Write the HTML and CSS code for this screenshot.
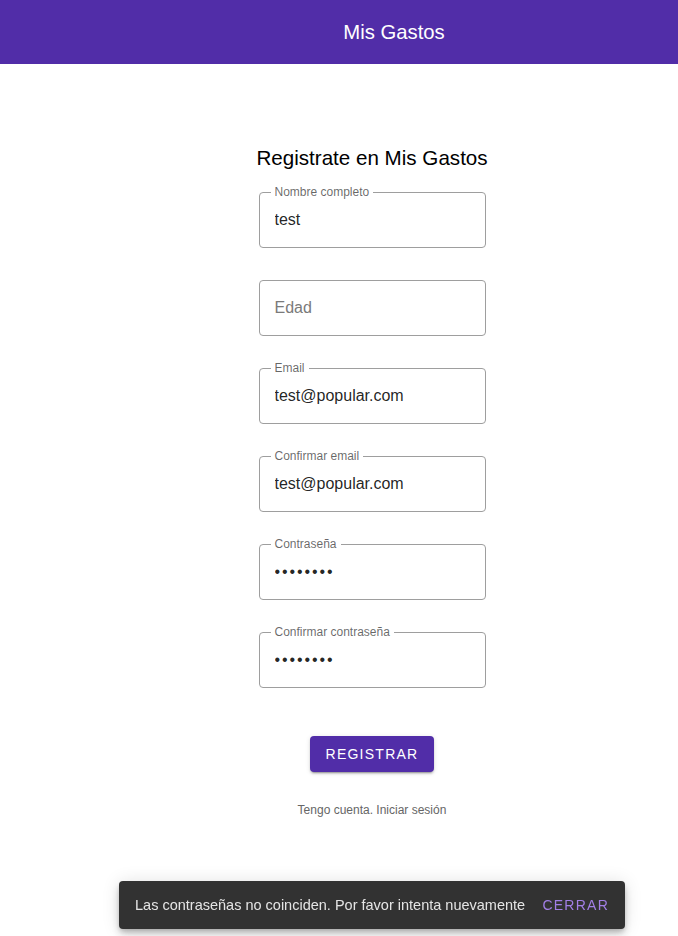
FILE: index.html
```html
<!DOCTYPE html>
<html lang="es">
<head>
<meta charset="utf-8">
<title>Mis Gastos</title>
<link rel="stylesheet" href="styles.css">
</head>
<body>
<header class="toolbar">
  <span class="toolbar-title">Mis Gastos</span>
</header>
<main class="page">
  <form class="register">
    <h2 class="register-title">Registrate en Mis Gastos</h2>
    <div class="field">
      <label class="field-label">Nombre completo</label>
      <input class="field-input" type="text" value="test">
    </div>
    <div class="field">
      <input class="field-input" type="text" placeholder="Edad">
    </div>
    <div class="field">
      <label class="field-label">Email</label>
      <input class="field-input" type="text" value="test@popular.com">
    </div>
    <div class="field">
      <label class="field-label">Confirmar email</label>
      <input class="field-input" type="text" value="test@popular.com">
    </div>
    <div class="field">
      <label class="field-label">Contraseña</label>
      <input class="field-input password" type="password" value="12345678">
    </div>
    <div class="field">
      <label class="field-label">Confirmar contraseña</label>
      <input class="field-input password" type="password" value="12345679">
    </div>
    <button class="btn-primary" type="button">Registrar</button>
    <a class="login-link" href="#">Tengo cuenta. Iniciar sesión</a>
  </form>
</main>
<div class="snackbar-wrap">
  <div class="snackbar">
    <span class="snackbar-text">Las contraseñas no coinciden. Por favor intenta nuevamente</span>
    <button class="snackbar-action" type="button">Cerrar</button>
  </div>
</div>
</body>
</html>
```
FILE: styles.css
```css
* { box-sizing: border-box; }
html, body {
  margin: 0;
  padding: 0;
  background: #fff;
  font-family: "Liberation Sans", Arial, sans-serif;
}
.toolbar {
  height: 64px;
  background: #512da8;
  display: flex;
  align-items: center;
  justify-content: center;
  padding-left: 110px;
}
.toolbar-title {
  color: #fff;
  font-size: 20.3px;
  line-height: 24px;
}
.page {
  padding-left: 66px;
  display: flex;
  justify-content: center;
}
.register {
  width: 227px;
  display: flex;
  flex-direction: column;
  align-items: center;
  padding-top: 82px;
}
.register-title {
  margin: 0 0 22px;
  font-size: 20.6px;
  font-weight: 400;
  line-height: 24px;
  color: #000;
  white-space: nowrap;
}
.field {
  position: relative;
  width: 227px;
  height: 56px;
  margin-bottom: 32px;
}
.field-label {
  position: absolute;
  top: -7px;
  left: 12px;
  padding: 0 4px;
  background: #fff;
  font-size: 12px;
  line-height: 14px;
  color: rgba(0, 0, 0, 0.6);
}
.field-input {
  width: 100%;
  height: 56px;
  border: 1px solid #9e9e9e;
  border-radius: 4px;
  padding: 0 15px;
  font-family: "Liberation Sans", Arial, sans-serif;
  font-size: 16px;
  color: rgba(0, 0, 0, 0.87);
  background: #fff;
  outline: none;
}
.field-input::placeholder { color: #7a7a7a; }
.field-input.password { letter-spacing: 1.9px; }
.btn-primary {
  margin-top: 16px;
  height: 36px;
  padding: 0 16px;
  border: none;
  border-radius: 4px;
  background: #512da8;
  color: #fff;
  font-family: "Liberation Sans", Arial, sans-serif;
  font-size: 14px;
  letter-spacing: 1.25px;
  text-transform: uppercase;
  box-shadow: 0 3px 1px -2px rgba(0,0,0,.2), 0 2px 2px 0 rgba(0,0,0,.14), 0 1px 5px 0 rgba(0,0,0,.12);
  cursor: pointer;
}
.login-link {
  margin-top: 31px;
  font-size: 12px;
  line-height: 14px;
  color: #666;
  text-decoration: none;
  white-space: nowrap;
}
.snackbar-wrap {
  position: fixed;
  left: 0;
  right: 0;
  bottom: 7px;
  padding-left: 66px;
  display: flex;
  justify-content: center;
}
.snackbar {
  width: 506px;
  height: 48px;
  background: #323232;
  border-radius: 4px;
  display: flex;
  align-items: center;
  justify-content: space-between;
  padding: 0 8px 0 16px;
  box-shadow: 0 3px 5px -1px rgba(0,0,0,.2), 0 6px 10px 0 rgba(0,0,0,.14), 0 1px 18px 0 rgba(0,0,0,.12);
}
.snackbar-text {
  color: rgba(255, 255, 255, 0.87);
  font-size: 14.5px;
  white-space: nowrap;
}
.snackbar-action {
  background: transparent;
  border: none;
  color: #a27fe6;
  font-family: "Liberation Sans", Arial, sans-serif;
  font-size: 14px;
  letter-spacing: 1.25px;
  text-transform: uppercase;
  padding: 0 8px;
  height: 36px;
}
```
